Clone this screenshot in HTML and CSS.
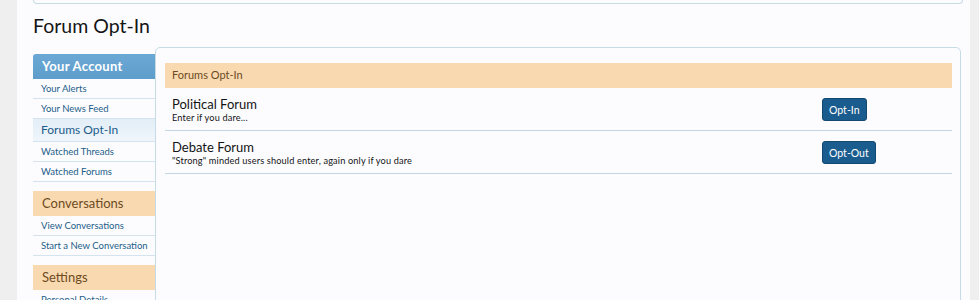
FILE: index.html
```html
<!DOCTYPE html>
<html>
<head>
<meta charset="utf-8">
<link rel="stylesheet" href="styles.css">
</head>
<body>
<div class="page">
  <div class="topbox"></div>
  <h1 class="title">Forum Opt-In</h1>
  <div class="layout">
    <nav class="sidebar">
      <div class="sec-head blue">Your Account</div>
      <a class="link">Your Alerts</a>
      <a class="link">Your News Feed</a>
      <a class="link selected">Forums Opt-In</a>
      <a class="link">Watched Threads</a>
      <a class="link">Watched Forums</a>
      <div class="sec-head orange">Conversations</div>
      <a class="link">View Conversations</a>
      <a class="link">Start a New Conversation</a>
      <div class="sec-head orange">Settings</div>
      <a class="link">Personal Details</a>
    </nav>
    <main class="panel">
      <div class="panel-head">Forums Opt-In</div>
      <div class="row">
        <div class="info">
          <div class="name">Political Forum</div>
          <div class="desc">Enter if you dare...</div>
        </div>
        <div class="action"><button class="btn">Opt-In</button></div>
      </div>
      <div class="row">
        <div class="info">
          <div class="name">Debate Forum</div>
          <div class="desc">"Strong" minded users should enter, again only if you dare</div>
        </div>
        <div class="action"><button class="btn">Opt-Out</button></div>
      </div>
    </main>
  </div>
</div>
</body>
</html>
```

FILE: styles.css
```css
html, body {
  margin: 0;
  padding: 0;
  background: #efefef;
  height: 300px;
  overflow: hidden;
}
body {
  font-family: Lato, "DejaVu Sans", sans-serif;
}
.page {
  margin-left: 17px;
  width: 953px;
  height: 300px;
  background: #fcfcff;
  box-sizing: border-box;
  padding: 0 9px 0 16px;
}
.topbox {
  width: 928px;
  height: 3px;
  border: 1px solid #c6dbe6;
  border-top: none;
  border-radius: 0 0 5px 5px;
  background: #fcfcff;
}
.title {
  margin: 10px 0 0 0;
  font-size: 19.5px;
  line-height: 24px;
  font-weight: normal;
  color: #141414;
}
.layout {
  display: flex;
  margin-top: 9px;
}
.sidebar {
  width: 122px;
  margin-top: 7px;
  display: flex;
  flex-direction: column;
}
.sec-head {
  height: 25px;
  line-height: 25px;
  padding-left: 9px;
  font-size: 13px;
}
.sec-head.blue {
  background: linear-gradient(#6ca8d6, #5e9dcb);
  color: #ffffff;
  font-weight: bold;
  letter-spacing: 0.3px;
  border-radius: 3px 0 0 0;
}
.sec-head.orange {
  background: #f9d9b0;
  color: #6d4b1f;
  margin-top: 9px;
}
.link {
  display: block;
  height: 19px;
  line-height: 19px;
  padding-left: 8px;
  font-size: 9.5px;
  color: #1d5d87;
  background: #fcfcff;
  border-bottom: 1px solid #d4e3ed;
  white-space: nowrap;
}
.link.selected {
  height: 22px;
  line-height: 22px;
  font-size: 12px;
  color: #1b5b8a;
  background: linear-gradient(#e3eef7, #eff5fb);
}
.panel {
  width: 806px;
  height: 260px;
  box-sizing: border-box;
  border: 1px solid #c6dbe6;
  border-radius: 5px 5px 0 0;
  padding: 15px 8px 0 9px;
  background: #fcfcff;
}
.panel-head {
  height: 25px;
  line-height: 24px;
  padding-left: 7px;
  background: #f9d9b0;
  color: #6d4b1f;
  font-size: 11px;
}
.row {
  display: grid;
  grid-template-columns: 1fr 130px;
  align-items: center;
  border-bottom: 1px solid #c3d7e2;
  height: 43px;
  box-sizing: border-box;
  padding: 1px 0 0 7px;
}
.name {
  font-size: 13px;
  line-height: 16px;
  color: #141414;
}
.desc {
  font-size: 9.2px;
  line-height: 11px;
  letter-spacing: 0.15px;
  color: #141414;
}
.btn {
  font-family: Lato, "DejaVu Sans", sans-serif;
  font-size: 10.5px;
  color: #ffffff;
  background: #1b5c8e;
  border: 1px solid #134870;
  border-radius: 3px;
  height: 23px;
  padding: 0 6px;
}
```
